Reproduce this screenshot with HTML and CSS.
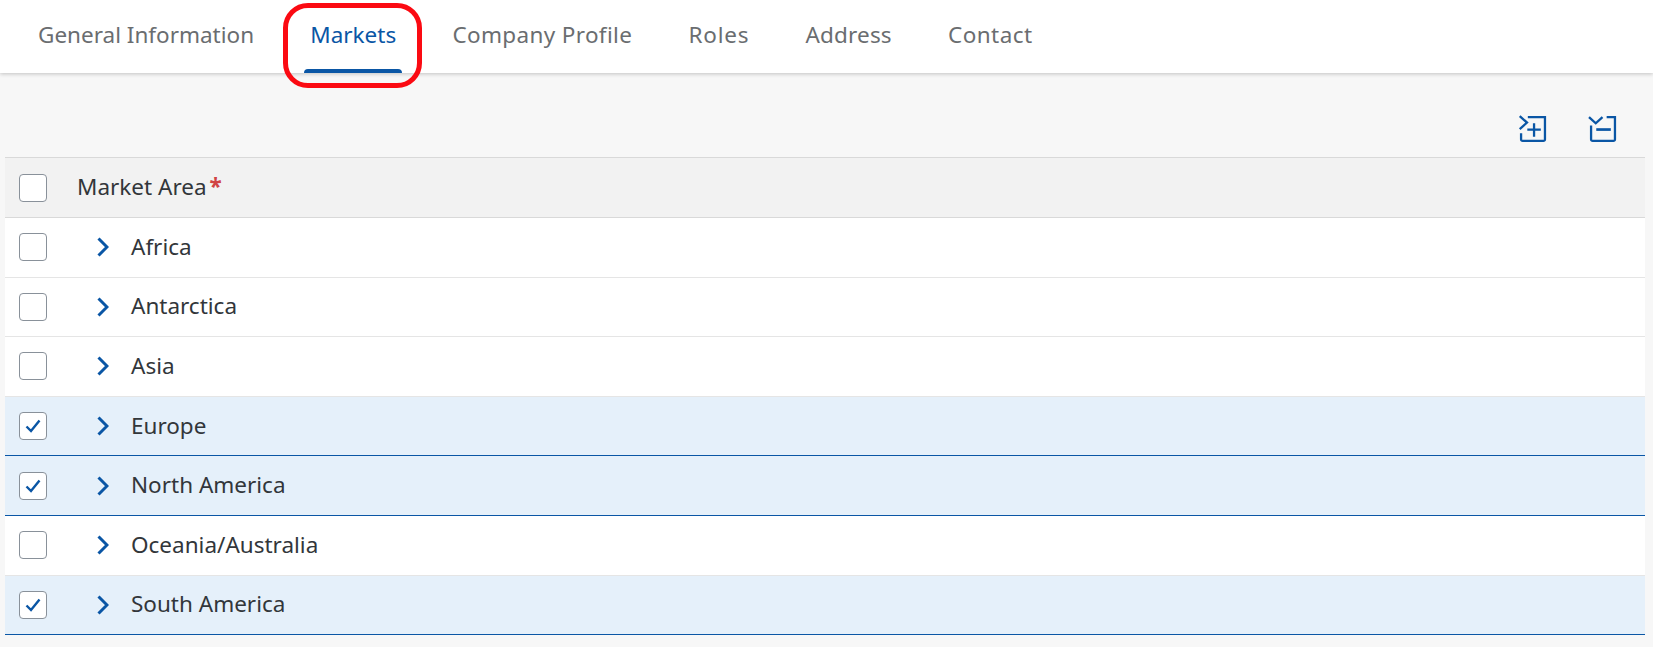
FILE: index.html
```html
<!DOCTYPE html>
<html lang="en">
<head>
<meta charset="utf-8">
<title>Markets</title>
<link rel="stylesheet" href="styles.css">
</head>
<body>
<header class="tabbar">
  <nav class="tabs">
    <a class="tab">General Information</a>
    <a class="tab active">Markets</a>
    <a class="tab tab-company">Company Profile</a>
    <a class="tab tab-roles">Roles</a>
    <a class="tab tab-address">Address</a>
    <a class="tab tab-contact">Contact</a>
  </nav>
  <div class="callout"></div>
</header>
<main class="content">
  <div class="toolbar">
    <button class="tool">
      <svg viewBox="0 0 26 26" width="27" height="27" fill="none" stroke="#0a56a5" stroke-width="2.200">
        <path d="M0.700 1l7 6.300-7 6.300"/>
        <path d="M8.500 2H25v21.500a1.500 1.500 0 0 1-1.500 1.500H3.500A1.500 1.500 0 0 1 2 23.500V17.500"/>
        <path d="M8 14h13M14.500 8v13"/>
      </svg>
    </button>
    <button class="tool">
      <svg viewBox="0 0 26 26" width="27" height="27" fill="none" stroke="#0a56a5" stroke-width="2.200">
        <path d="M0 2l6.500 6L13 2"/>
        <path d="M17 2h8v21.500a1.500 1.500 0 0 1-1.500 1.500H3.500A1.500 1.500 0 0 1 2 23.500V10"/>
        <path d="M7 14h14" stroke-width="2.600"/>
      </svg>
    </button>
  </div>
  <div class="table">
    <div class="row head">
      <span class="check"></span>
      <span class="head-label">Market Area<span class="req">*</span></span>
    </div>
    <div class="row"><span class="check"></span><svg class="chev" viewBox="0 0 12 20" width="12" height="20"><path d="M1.500 1.500l8.500 8.500-8.500 8.500"/></svg><span class="label">Africa</span></div>
    <div class="row"><span class="check"></span><svg class="chev" viewBox="0 0 12 20" width="12" height="20"><path d="M1.500 1.500l8.500 8.500-8.500 8.500"/></svg><span class="label">Antarctica</span></div>
    <div class="row"><span class="check"></span><svg class="chev" viewBox="0 0 12 20" width="12" height="20"><path d="M1.500 1.500l8.500 8.500-8.500 8.500"/></svg><span class="label">Asia</span></div>
    <div class="row selected"><span class="check"><svg viewBox="0 0 16 14" width="16" height="14"><path d="M1.500 7.500l4.500 4.500 8.500-10.500"/></svg></span><svg class="chev" viewBox="0 0 12 20" width="12" height="20"><path d="M1.500 1.500l8.500 8.500-8.500 8.500"/></svg><span class="label">Europe</span></div>
    <div class="row selected"><span class="check"><svg viewBox="0 0 16 14" width="16" height="14"><path d="M1.500 7.500l4.500 4.500 8.500-10.500"/></svg></span><svg class="chev" viewBox="0 0 12 20" width="12" height="20"><path d="M1.500 1.500l8.500 8.500-8.500 8.500"/></svg><span class="label">North America</span></div>
    <div class="row"><span class="check"></span><svg class="chev" viewBox="0 0 12 20" width="12" height="20"><path d="M1.500 1.500l8.500 8.500-8.500 8.500"/></svg><span class="label">Oceania/Australia</span></div>
    <div class="row selected"><span class="check"><svg viewBox="0 0 16 14" width="16" height="14"><path d="M1.500 7.500l4.500 4.500 8.500-10.500"/></svg></span><svg class="chev" viewBox="0 0 12 20" width="12" height="20"><path d="M1.500 1.500l8.500 8.500-8.500 8.500"/></svg><span class="label">South America</span></div>
  </div>
</main>
</body>
</html>
```

FILE: styles.css
```css
* { box-sizing: border-box; }
html, body { margin: 0; padding: 0; height: 100%; overflow: hidden; }
body {
  background: #f7f7f7;
  font-family: "Noto Sans", "Open Sans", sans-serif;
  color: #32363a;
}
.tabbar {
  position: relative;
  z-index: 1;
  height: 73px;
  background: #fff;
  box-shadow: 0 1px 4px rgba(0, 0, 0, .22);
  padding-left: 32px;
}
.tabs { display: flex; height: 100%; gap: 44.200px; }
.tab {
  position: relative;
  display: flex;
  align-items: center;
  height: 100%;
  padding: 0 6px 5px;
  font-size: 22.500px;
  color: #6a6d70;
  white-space: nowrap;
}
.tab-company { letter-spacing: .35px; }
.tab-roles { letter-spacing: .8px; }
.tab-address { letter-spacing: .15px; }
.tab-contact { letter-spacing: .45px; }
.tab.active { color: #0a56a5; }
.tab.active::after {
  content: "";
  position: absolute;
  left: 0;
  right: 0;
  bottom: 0;
  height: 4.500px;
  background: #0a56a5;
  border-radius: 4px 4px 0 0;
}
.callout {
  position: absolute;
  left: 283px;
  top: 3px;
  width: 139px;
  height: 85px;
  border: 5px solid #fb0a12;
  border-radius: 25px;
}
.content { padding: 0 8px 0 5px; }
.toolbar {
  display: flex;
  justify-content: flex-end;
  gap: 43px;
  height: 84px;
  padding: 42px 29px 0 0;
}
.tool { width: 27px; height: 27px; padding: 0; border: 0; background: none; display: block; }
.tool svg { display: block; overflow: visible; }
.table { border-top: 1px solid #d9d9d9; }
.row {
  display: flex;
  align-items: center;
  height: 59.600px;
  background: #fff;
  border-bottom: 1px solid #e5e5e5;
  padding-left: 14px;
  font-size: 22.500px;
}
.row.head { height: 60px; background: #f2f2f2; border-bottom-color: #d9d9d9; }
.row.selected { background: #e5f0fa; border-bottom-color: #0a56a5; }
.check {
  flex: none;
  display: flex;
  align-items: center;
  justify-content: center;
  width: 28px;
  height: 28px;
  background: #fff;
  border: 1px solid #89919a;
  border-radius: 4px;
}
.check svg { fill: none; stroke: #0a56a5; stroke-width: 2.400; }
.chev { flex: none; margin-left: 50px; fill: none; stroke: #0a56a5; stroke-width: 3; }
.label { margin-left: 22px; padding-bottom: 2px; }
.head-label { margin-left: 30px; padding-bottom: 2px; }
.req { color: #d04343; margin-left: 3px; font-weight: 700; }
```
